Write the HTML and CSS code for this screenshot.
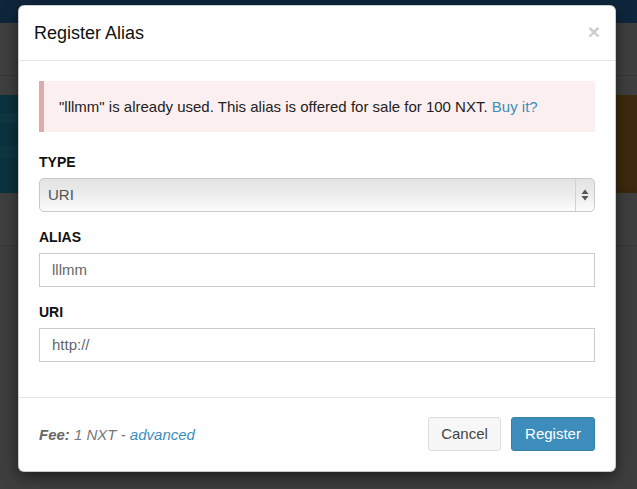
FILE: index.html
```html
<!DOCTYPE html>
<html lang="en">
<head>
<meta charset="utf-8">
<title>Register Alias</title>
<link rel="stylesheet" href="styles.css">
</head>
<body>
<div class="scr">
  <div class="scr-nav"></div>
  <div class="scr-strip scr-strip-a"></div>
  <div class="scr-strip scr-strip-b"></div>
  <div class="scr-boxes">
    <div class="scr-box-teal">
      <div class="scr-line"></div>
      <div class="scr-line"></div>
    </div>
    <div class="scr-box-orange"></div>
  </div>
  <div class="scr-strip scr-strip-c"></div>
  <div class="scr-strip scr-fill"></div>
</div>

<div class="dialog">
  <div class="dialog-header">
    <span class="dialog-close">&times;</span>
    <h4 class="dialog-title">Register Alias</h4>
  </div>
  <div class="dialog-body">
    <div class="notice">"lllmm" is already used. This alias is offered for sale for 100 NXT. <a class="link" href="#">Buy it?</a></div>
    <div class="field">
      <label class="field-label">TYPE</label>
      <div class="select">
        <span class="select-value">URI</span>
        <span class="select-arrows">
          <svg width="8" height="12" viewBox="0 0 8 12"><path d="M4 0.5 L7.5 5 L0.5 5 Z M0.5 7 L7.5 7 L4 11.5 Z" fill="#555"/></svg>
        </span>
      </div>
    </div>
    <div class="field">
      <label class="field-label">ALIAS</label>
      <div class="text-input">lllmm</div>
    </div>
    <div class="field">
      <label class="field-label">URI</label>
      <div class="text-input">http://</div>
    </div>
  </div>
  <div class="dialog-footer">
    <div class="fee"><b>Fee:</b> 1 NXT - <a class="link" href="#">advanced</a></div>
    <div class="actions">
      <button class="action action-cancel">Cancel</button>
      <button class="action action-register">Register</button>
    </div>
  </div>
</div>
</body>
</html>
```

FILE: styles.css
```css
* { box-sizing: border-box; }
html, body { margin: 0; padding: 0; }
html { background-color: #3e3e3e; }
body {
  width: 637px;
  height: 489px;
  overflow: hidden;
  background-color: #3e3e3e;
  font-family: "Liberation Sans", Arial, sans-serif;
  font-size: 15px;
  line-height: 21px;
  color: #333333;
  position: relative;
}
.scr { display: flex; flex-direction: column; height: 489px; }
.scr-nav { height: 23px; background-color: #0e263c; }
.scr-strip { background-color: #3f3f3f; }
.scr-strip-a { height: 53px; border-bottom: 1px solid #373737; }
.scr-strip-b { height: 19px; background-color: #3f3f3f; }
.scr-boxes { height: 98px; display: flex; }
.scr-box-teal { flex: 1; background-color: #0b323e; display: flex; flex-direction: column; padding-top: 18px; gap: 24px; }
.scr-line { height: 10px; background-color: #0e3743; }
.scr-box-orange { flex: 1; background-color: #3e2a0e; border-bottom: 6px solid #3b270d; }
.scr-strip-c { height: 53px; background-color: #3f3f3f; border-bottom: 1px solid #373737; }
.scr-fill { flex: 1; background-color: #3e3e3e; }

.dialog {
  position: absolute;
  left: 18px;
  top: 5px;
  width: 598px;
  background: #fff;
  border: 1px solid rgba(0,0,0,0.2);
  border-radius: 6px;
  box-shadow: 0 5px 15px rgba(0,0,0,0.5);
}
.dialog-header {
  padding: 15px;
  border-bottom: 1px solid #e5e5e5;
}
.dialog-title {
  margin: 0;
  font-size: 18px;
  font-weight: normal;
  line-height: 24px;
  color: #111;
}
.dialog-close {
  float: right;
  font-size: 21px;
  font-weight: bold;
  line-height: 1;
  color: #cccccc;
}
.dialog-body { padding: 20px; }
.notice {
  background: #fbf0ef;
  border-left: 5px solid #ddabab;
  padding: 15px;
  margin-bottom: 20px;
  color: #222;
}
.link { color: #3c8dbc; text-decoration: none; }
.field { margin-bottom: 15px; }
.field-label {
  display: block;
  font-weight: bold;
  font-size: 14px;
  color: #111;
  margin-bottom: 5px;
}
.select {
  display: flex;
  height: 34px;
  border: 1px solid #c8c8c8;
  border-radius: 5px;
  background: linear-gradient(#e4e4e4, #ececec 50%, #fdfdfd);
  color: #555;
}
.select-value { flex: 1; padding-left: 8px; line-height: 32px; }
.select-arrows {
  width: 19px;
  border-left: 1px solid #d2d2d2;
  display: flex;
  align-items: center;
  justify-content: center;
}
.text-input {
  height: 34px;
  border: 1px solid #ccc;
  padding: 0 12px;
  color: #666;
  line-height: 32px;
}
.dialog-footer {
  padding: 19px 20px 20px;
  border-top: 1px solid #e5e5e5;
  display: flex;
  justify-content: space-between;
  align-items: center;
}
.fee { font-style: italic; color: #777; }
.fee b { color: #666; }
.actions { display: flex; gap: 10px; }
.action {
  height: 34px;
  padding: 0 12px;
  font-family: "Liberation Sans", Arial, sans-serif;
  font-size: 15px;
  line-height: 32px;
  border-radius: 3px;
  border: 1px solid #ddd;
}
.action-cancel { background: #f7f7f7; color: #444; width: 73px; }
.action-register { background: #3c8dbc; border-color: #367fa9; color: #fff; width: 84px; }
```
